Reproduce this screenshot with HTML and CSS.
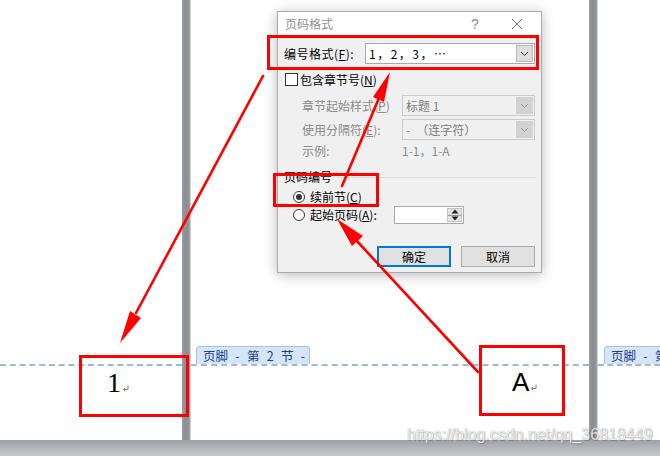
FILE: index.html
```html
<!DOCTYPE html>
<html lang="zh-CN">
<head>
<meta charset="utf-8">
<title>页码格式</title>
<link rel="stylesheet" href="styles.css">
</head>
<body>
<div class="screen">
  <div class="pages">
    <div class="page page-first">
      <div class="footer-tabrow"></div>
      <div class="footer-body footer-body-first">
        <span class="pnum pnum-serif">1</span><svg class="para" width="7" height="7" viewBox="0 0 7 7"><path d="M6 0.5V4.5H1.5M3.2 2.8L1.3 4.5L3.2 6.2" fill="none" stroke="#7f7f7f" stroke-width="1"/></svg>
      </div>
    </div>
    <div class="gutter"></div>
    <div class="page page-mid">
      <div class="footer-tabrow"><span class="footer-tab">页脚 - 第 2 节 -</span></div>
      <div class="footer-body footer-body-mid">
        <span class="pnum pnum-sans">A</span><svg class="para" width="7" height="7" viewBox="0 0 7 7"><path d="M6 0.5V4.5H1.5M3.2 2.8L1.3 4.5L3.2 6.2" fill="none" stroke="#7f7f7f" stroke-width="1"/></svg>
      </div>
    </div>
    <div class="gutter"></div>
    <div class="page page-last">
      <div class="footer-tabrow"><span class="footer-tab">页脚 - 第 3 节 -</span></div>
      <div class="footer-body"></div>
    </div>
  </div>
  <div class="status"></div>

  <div class="dialog">
    <div class="dlg-title">
      <span class="dlg-caption">页码格式</span>
      <span class="dlg-help">?</span>
      <span class="dlg-close"><svg width="12" height="12" viewBox="0 0 12 12"><path d="M1 1L11 11M11 1L1 11" stroke="#6f6f6f" stroke-width="1" fill="none"/></svg></span>
    </div>
    <div class="dlg-body">
      <div class="row row-format">
        <span class="lbl lbl-format">编号格式(<u>F</u>):</span>
        <div class="combo combo-wide">
          <span class="combo-text">1，2，3，…</span>
          <span class="combo-btn"><svg width="9" height="6" viewBox="0 0 9 6"><path d="M1 1L4.5 4.5L8 1" fill="none" stroke="#333" stroke-width="1"/></svg></span>
        </div>
      </div>
      <div class="row row-check">
        <span class="checkbox"></span>
        <span class="check-text">包含章节号(<u>N</u>)</span>
      </div>
      <div class="row row-sub row-first-sub">
        <span class="lbl lbl-sub is-muted">章节起始样式(<u>P</u>)</span>
        <div class="combo combo-narrow is-disabled">
          <span class="combo-text">标题 1</span>
          <span class="combo-btn"><svg width="9" height="6" viewBox="0 0 9 6"><path d="M1 1L4.5 4.5L8 1" fill="none" stroke="#9a9a9a" stroke-width="1"/></svg></span>
        </div>
      </div>
      <div class="row row-sub row-next-sub">
        <span class="lbl lbl-sub is-muted">使用分隔符(<u>E</u>):</span>
        <div class="combo combo-narrow is-disabled">
          <span class="combo-text">-　（连字符）</span>
          <span class="combo-btn"><svg width="9" height="6" viewBox="0 0 9 6"><path d="M1 1L4.5 4.5L8 1" fill="none" stroke="#9a9a9a" stroke-width="1"/></svg></span>
        </div>
      </div>
      <div class="row row-sub row-sample">
        <span class="lbl lbl-sub is-muted">示例:</span>
        <span class="sample is-muted">1-1，1-A</span>
      </div>
      <div class="row group-head">
        <span class="group-title">页码编号</span>
        <span class="group-line"></span>
      </div>
      <div class="row row-radio row-radio-first">
        <span class="radio is-on"></span>
        <span class="radio-text">续前节(<u>C</u>)</span>
      </div>
      <div class="row row-radio row-radio-second">
        <span class="radio"></span>
        <span class="radio-text radio-text-fixed">起始页码(<u>A</u>):</span>
        <div class="spin">
          <span class="spin-field"></span>
          <span class="spin-btns">
            <svg width="8" height="5" viewBox="0 0 8 5"><path d="M4 0.5L7.5 4.5H0.5Z" fill="#222"/></svg>
            <span class="spin-sep"></span>
            <svg width="8" height="5" viewBox="0 0 8 5"><path d="M0.5 0.5H7.5L4 4.5Z" fill="#222"/></svg>
          </span>
        </div>
      </div>
      <div class="row row-buttons">
        <span class="btn btn-default">确定</span>
        <span class="btn">取消</span>
      </div>
    </div>
  </div>

  <svg class="annot" width="660" height="456" viewBox="0 0 660 456">
    <g fill="none" stroke="#ff0000" stroke-width="3">
      <rect x="268.5" y="36.5" width="269" height="32"/>
      <rect x="274.5" y="174.5" width="103" height="31"/>
      <rect x="80.5" y="356.5" width="107" height="59"/>
      <rect x="480.5" y="346.5" width="83" height="68"/>
    </g>
    <g stroke="#ff0000" stroke-width="2.6" stroke-linecap="round" fill="none">
      <line x1="263" y1="76" x2="136" y2="313"/>
      <line x1="342" y1="186" x2="379" y2="98"/>
      <line x1="478" y1="372" x2="356" y2="240"/>
    </g>
    <g fill="#ff0000">
      <polygon points="120,343 141,318 130,311"/>
      <polygon points="390,72 384,102 373,97"/>
      <polygon points="337,219 363,236 352,246"/>
    </g>
  </svg>

  <div class="watermark">https://blog.csdn.net/qq_36818449</div>
</div>
</body>
</html>
```

FILE: styles.css
```css
* { box-sizing: border-box; }

html, body {
  margin: 0;
  padding: 0;
  width: 660px;
  height: 456px;
  overflow: hidden;
  background: #ffffff;
}

.screen {
  position: relative;
  width: 660px;
  height: 456px;
  display: flex;
  flex-direction: column;
  font-family: "Noto Sans CJK SC", "Noto Sans", sans-serif;
}

.pages {
  display: flex;
  height: 440px;
  overflow: hidden;
}

.page {
  background: #ffffff;
  padding-top: 346px;
  display: flex;
  flex-direction: column;
  flex-shrink: 0;
}

.page-first { width: 182px; }
.page-mid { width: 399px; border-left: 1px solid #cfd0d2; }
.page-last { flex: 1 1 0; min-width: 0; overflow: hidden; border-left: 1px solid #cfd0d2; }

.gutter {
  width: 8px;
  flex-shrink: 0;
  background: linear-gradient(to right, #9a9da1, #8b8e93 40%, #8f9297 80%, #a3a6aa);
}

.status {
  height: 16px;
  background: linear-gradient(to bottom, #9ea1a5, #b4b6b9 50%, #c7c8cb);
}

.footer-tabrow {
  height: 18px;
  display: flex;
  align-items: flex-end;
  padding-left: 5px;
}

.footer-tab {
  flex-shrink: 0;
  height: 18px;
  width: 114px;
  padding: 0 0 0 6px;
  background: #d6e5f5;
  border: 1px solid #a4c0e3;
  border-bottom: none;
  border-radius: 4px 4px 0 0;
  color: #1d3d8c;
  font-size: 12.5px;
  line-height: 17px;
  white-space: pre;
  overflow: hidden;
  word-spacing: 4.5px;
}

.page-last .footer-tab { margin-left: 1px; }

.footer-body {
  border-top: 2px dashed #9cb8dc;
  padding-top: 3px;
  display: flex;
  align-items: baseline;
}

.footer-body-first { padding-left: 107px; }
.footer-body-mid { padding-left: 321px; }

.pnum {
  color: #000;
  line-height: 27px;
}

.pnum-serif {
  font-family: "Liberation Serif", serif;
  font-size: 28px;
}

.pnum-sans {
  font-family: "Liberation Sans", sans-serif;
  font-size: 26px;
}

.para {
  margin-left: 1px;
}

/* dialog */
.dialog {
  position: absolute;
  left: 277px;
  top: 11px;
  width: 265px;
  height: 262px;
  border: 1px solid #ababab;
  background: #f0f0f0;
  box-shadow: 0 2px 12px rgba(0, 0, 0, 0.28);
  font-size: 12px;
  line-height: 16px;
  color: #000;
}

.dlg-title {
  height: 24px;
  background: #ffffff;
  display: flex;
  align-items: center;
  padding-left: 7px;
}

.dlg-caption {
  color: #8f8f8f;
}

.dlg-help {
  margin-left: auto;
  width: 16px;
  text-align: center;
  color: #8a8a8a;
  font-family: "Liberation Sans", sans-serif;
  font-size: 14px;
}

.dlg-close {
  width: 20px;
  height: 12px;
  margin-left: 24px;
  margin-right: 14px;
  display: flex;
  justify-content: center;
}

.dlg-body {
  padding-left: 6px;
}

.row {
  display: flex;
  align-items: center;
}

.row-format {
  margin-top: 7px;
  height: 21px;
}

.lbl-format { width: 81px; letter-spacing: 0.5px; }

.combo {
  display: flex;
  height: 21px;
  border: 1px solid #a9a9a9;
  background: #ffffff;
}

.combo-wide { width: 170px; }
.combo-narrow { width: 133px; }

.combo-text {
  flex: 1;
  padding-left: 3px;
  line-height: 19px;
  white-space: pre;
}

.combo-wide .combo-text { letter-spacing: 1.5px; }

.combo-btn {
  width: 17px;
  margin: 1px;
  background: #dedede;
  border: 1px solid #b9b9b9;
  display: flex;
  align-items: center;
  justify-content: center;
}

.combo.is-disabled {
  border-color: #cbcbcb;
  background: #f0f0f0;
}

.combo.is-disabled .combo-text { color: #7d7d7d; }

.combo.is-disabled .combo-btn {
  background: #d2d2d2;
  border-color: #d2d2d2;
}

.row-check {
  margin-top: 9px;
  height: 13px;
}

.checkbox {
  width: 13px;
  height: 13px;
  margin-left: 1px;
  border: 1px solid #333;
  background: #fff;
}

.check-text { margin-left: 2px; }

.row-sub { padding-left: 18px; }

.row-first-sub { margin-top: 9px; height: 21px; }
.row-next-sub { margin-top: 3px; height: 21px; }
.row-sample { margin-top: 3px; height: 16px; }

.lbl-sub { width: 100px; }

.is-muted { color: #8a8a8a; }

.sample { white-space: pre; }

.group-head {
  margin-top: 10px;
  height: 16px;
}

.group-line {
  flex: 1;
  height: 1px;
  margin-left: 6px;
  margin-right: 5px;
  background: #dcdcdc;
}

.row-radio { padding-left: 9px; }

.row-radio-first { margin-top: 4px; height: 16px; }
.row-radio-second { margin-top: 1px; height: 18px; }

.radio {
  width: 12px;
  height: 12px;
  border: 1px solid #333;
  border-radius: 50%;
  background: #fff;
  display: flex;
  align-items: center;
  justify-content: center;
}

.radio.is-on::after {
  content: "";
  width: 6px;
  height: 6px;
  border-radius: 50%;
  background: #333;
}

.radio-text { margin-left: 5px; }
.radio-text-fixed { width: 84px; }

.spin {
  width: 70px;
  height: 18px;
  border: 1px solid #a9a9a9;
  background: #fff;
  display: flex;
}

.spin-field { flex: 1; }

.spin-btns {
  width: 15px;
  margin: 1px 1px 1px 0;
  background: #e3e3e3;
  border: 1px solid #c4c4c4;
  display: flex;
  flex-direction: column;
  align-items: center;
  justify-content: space-evenly;
}

.spin-sep {
  width: 100%;
  height: 1px;
  background: #9a9a9a;
}

.row-buttons {
  margin-top: 22px;
  height: 21px;
  justify-content: flex-end;
  padding-right: 6px;
  gap: 10px;
}

.btn {
  width: 74px;
  height: 21px;
  border: 1px solid #adadad;
  background: #e1e1e1;
  display: flex;
  align-items: center;
  justify-content: center;
}

.btn-default {
  border: 2px solid #0078d7;
}

u { text-decoration: underline; text-underline-offset: 1px; }

.annot {
  position: absolute;
  left: 0;
  top: 0;
  pointer-events: none;
}

.watermark {
  position: absolute;
  left: 407px;
  top: 425px;
  font-family: "Liberation Sans", sans-serif;
  font-size: 16px;
  line-height: 20px;
  color: rgba(255, 255, 255, 0.82);
  text-shadow: 0 0 1px rgba(70, 70, 70, 0.55), 1px 1px 1px rgba(0, 0, 0, 0.2);
  white-space: nowrap;
}
```
